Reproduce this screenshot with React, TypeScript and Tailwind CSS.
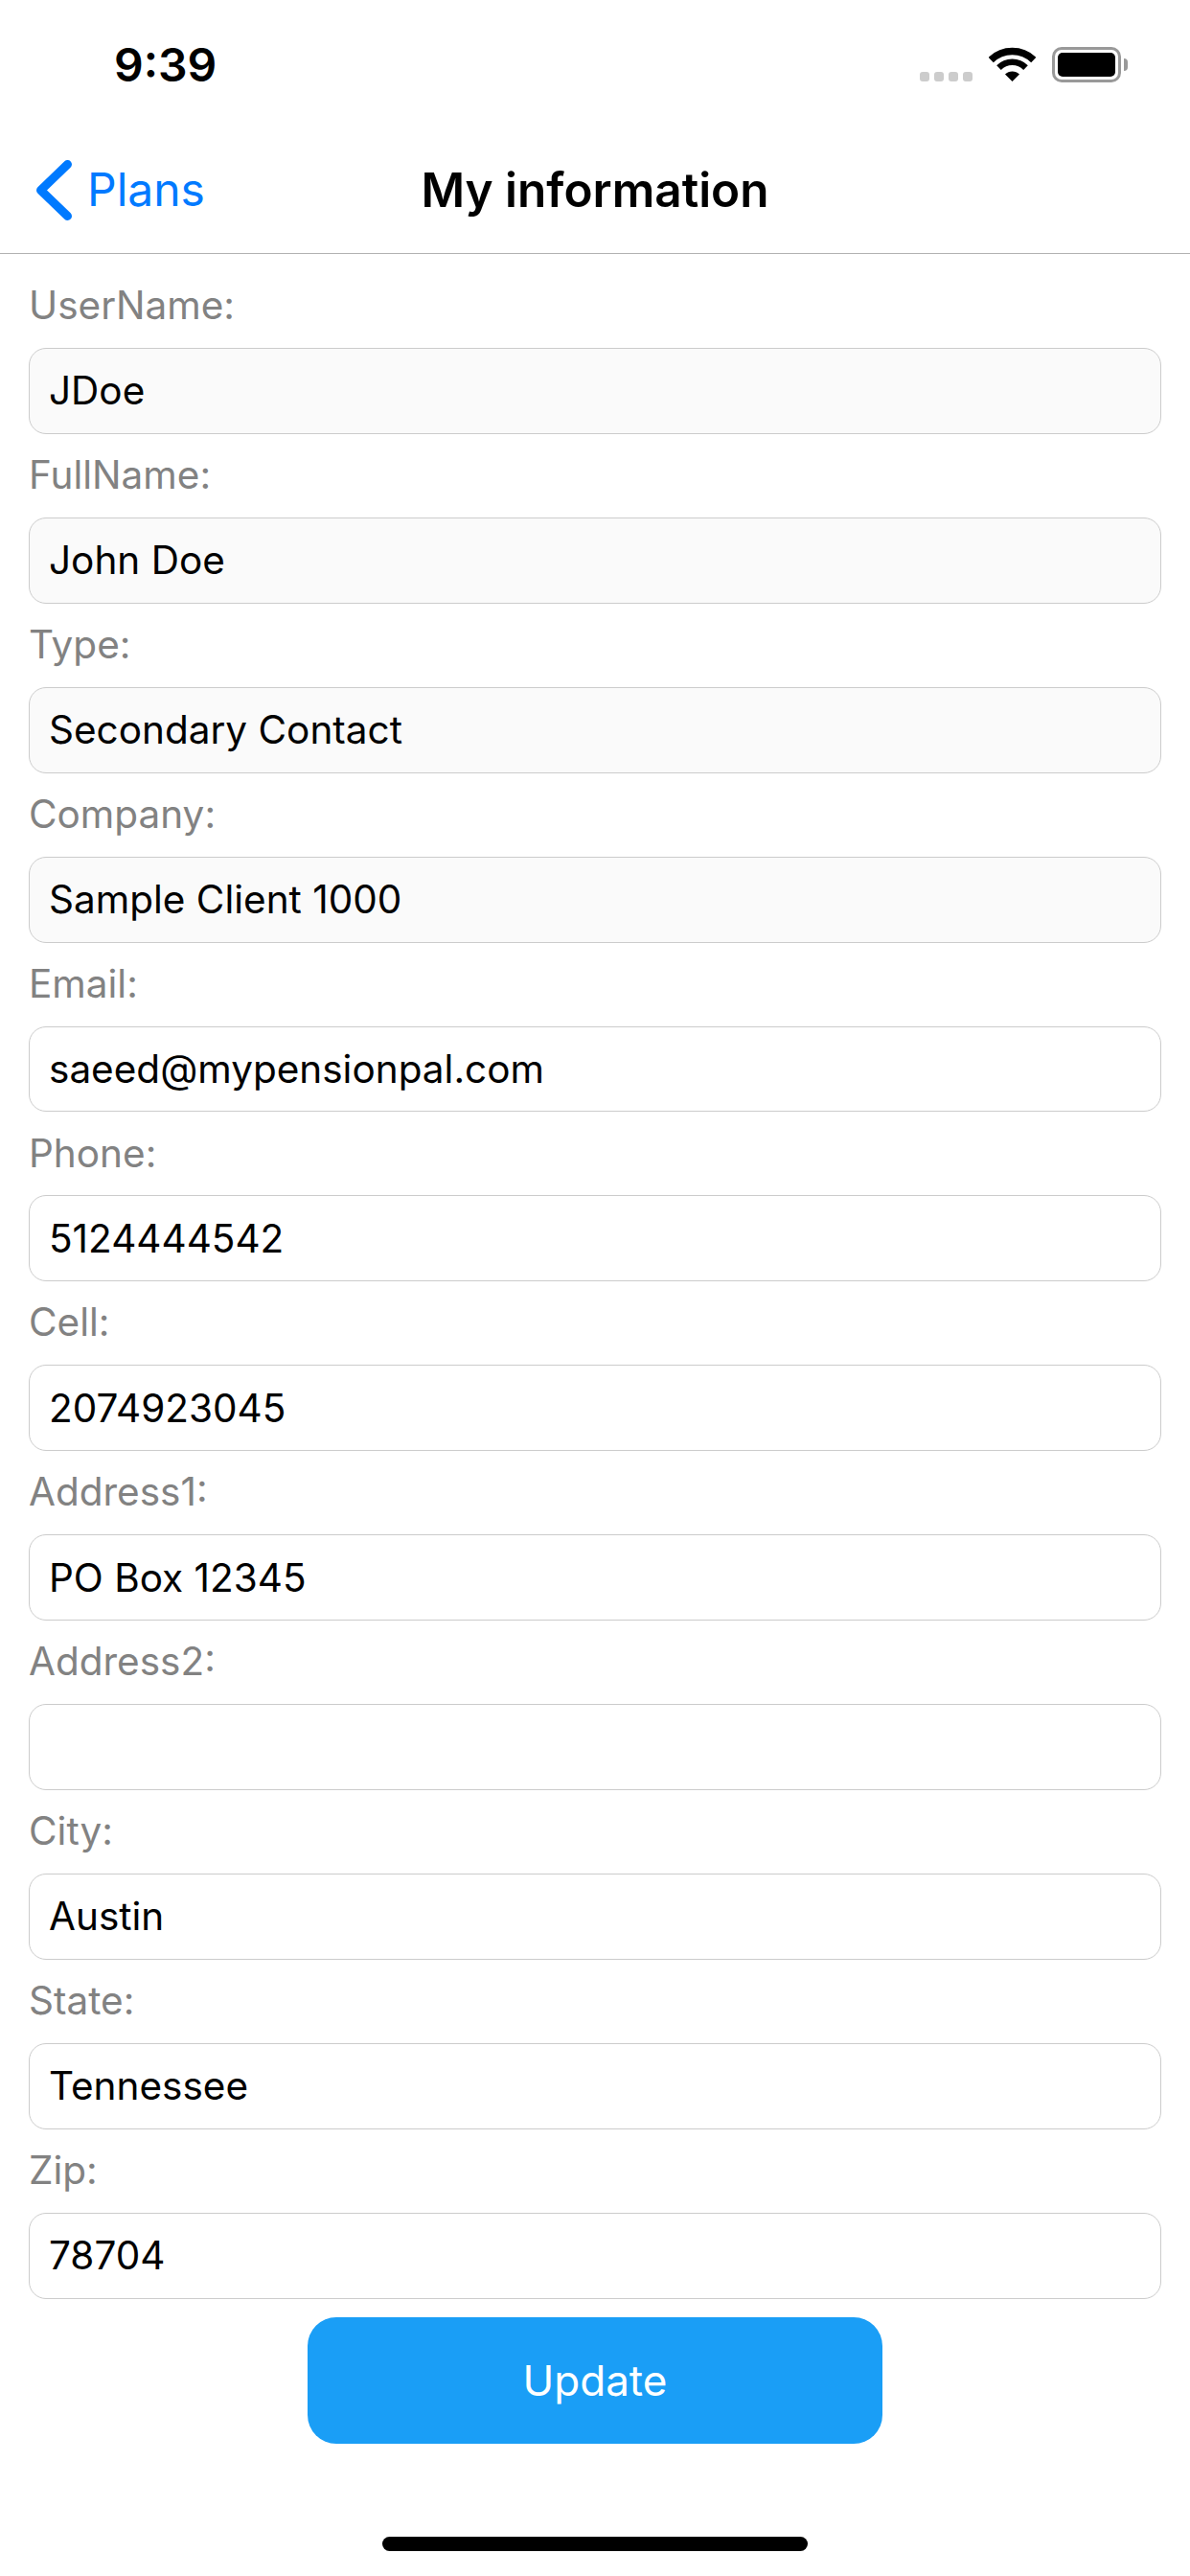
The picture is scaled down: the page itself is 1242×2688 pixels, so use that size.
const FONT = "font-['Inter','Liberation_Sans',sans-serif]";

type Field = {
  label: string;
  value: string;
  disabled?: boolean;
};

const fields: Field[] = [
  { label: "UserName:", value: "JDoe", disabled: true },
  { label: "FullName:", value: "John Doe", disabled: true },
  { label: "Type:", value: "Secondary Contact", disabled: true },
  { label: "Company:", value: "Sample Client 1000", disabled: true },
  { label: "Email:", value: "saeed@mypensionpal.com" },
  { label: "Phone:", value: "5124444542" },
  { label: "Cell:", value: "2074923045" },
  { label: "Address1:", value: "PO Box 12345" },
  { label: "Address2:", value: "" },
  { label: "City:", value: "Austin" },
  { label: "State:", value: "Tennessee" },
  { label: "Zip:", value: "78704" },
];

const StatusBar = () => (
  <div className="flex h-[108px] shrink-0 items-start justify-between pl-[119px] pr-[65px] pt-[49px]">
    <span className="text-[48px] leading-[37px] font-semibold text-black">9:39</span>
    <div className="flex items-start">
      <div className="mt-[26px] flex gap-[5px]">
        <span className="h-[10px] w-[10px] rounded-[3px] bg-[#cccccc]" />
        <span className="h-[10px] w-[10px] rounded-[3px] bg-[#cccccc]" />
        <span className="h-[10px] w-[10px] rounded-[3px] bg-[#cccccc]" />
        <span className="h-[10px] w-[10px] rounded-[3px] bg-[#cccccc]" />
      </div>
      <svg className="ml-[17px]" width="49" height="36" viewBox="0 0 49 36">
        <path d="M2.2 13.6 A32 32 0 0 1 46.8 13.6" fill="none" stroke="#000" strokeWidth="7.5" />
        <path d="M10.5 21.6 A19.8 19.8 0 0 1 38.5 21.6" fill="none" stroke="#000" strokeWidth="6.5" />
        <path d="M24.5 36 L17 28.5 A10.6 10.6 0 0 1 32 28.5 Z" fill="#000" />
      </svg>
      <div className="ml-[17px] flex items-center">
        <div className="flex h-[37px] w-[72px] items-center justify-center rounded-[10px] border-[3px] border-[#999999] bg-white">
          <div className="h-[25px] w-[60px] rounded-[5px] bg-black" />
        </div>
        <div className="ml-[3px] h-[13px] w-[4px] rounded-r-[4px] bg-[#999999]" />
      </div>
    </div>
  </div>
);

const NavBar = () => (
  <div className="flex h-[157px] shrink-0 items-start border-b border-[#b2b2b2] pt-[59px]">
    <div className="flex flex-1 items-start">
      <svg className="ml-[38px]" width="37" height="63" viewBox="0 0 37 63">
        <path
          d="M32.5 4.5 L4.5 31.5 L32.5 58.5"
          fill="none"
          stroke="#007aff"
          strokeWidth="9"
          strokeLinecap="round"
          strokeLinejoin="round"
        />
      </svg>
      <span className="ml-[16px] text-[48px] leading-[62px] text-[#007aff]">Plans</span>
    </div>
    <h1 className="text-[49.5px] leading-[62px] font-semibold text-black">My information</h1>
    <div className="flex-1" />
  </div>
);

const FormField = ({ label, value, disabled }: Field) => (
  <div className="flex flex-col">
    <label className="flex h-[87px] items-center text-[40.5px] text-[#828282]">{label}</label>
    <input
      type="text"
      defaultValue={value}
      readOnly={disabled}
      className={`h-[89.9px] w-full rounded-[18px] border border-[#cccccc] pl-[20px] text-[40.5px] text-black outline-none ${
        disabled ? "bg-[#fafafa]" : "bg-white"
      }`}
    />
  </div>
);

const App = () => {
  return (
    <div className={`flex h-[2688px] w-[1242px] flex-col overflow-hidden bg-white ${FONT}`}>
      <StatusBar />
      <NavBar />
      <div className="flex flex-col px-[30px] pt-[11px]">
        {fields.map((field) => (
          <FormField key={field.label} {...field} />
        ))}
      </div>
      <button className="mx-auto mt-[19px] flex h-[132px] w-[600px] items-center justify-center rounded-[30px] bg-[#1a9ef6] text-[44px] text-white">
        Update
      </button>
      <div className="mx-auto mt-[97px] h-[15px] w-[444px] rounded-full bg-black" />
    </div>
  );
};

export default App;
